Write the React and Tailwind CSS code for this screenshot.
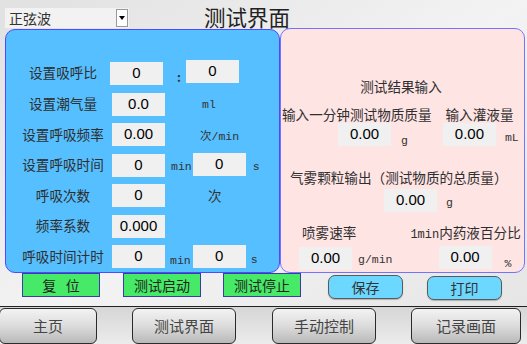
import React from 'react';

const cjk = { fontFamily: '"Noto Sans CJK SC", "Noto Sans", sans-serif' };
const num = { fontFamily: '"Liberation Sans", Arial, sans-serif' };
const mono = { fontFamily: '"Liberation Mono", "Noto Sans CJK SC", monospace' };

const Box = ({ value, className = '' }) => (
  <div
    style={num}
    className={`w-[53px] h-[23px] bg-[#f0f0f0] flex items-center justify-center text-[15px] text-black ${className}`}
  >
    {value}
  </div>
);

const Unit = ({ children, className = '' }) => (
  <span style={mono} className={`text-[11.5px] text-[#333] leading-none ${className}`}>
    {children}
  </span>
);

const Label = ({ children }) => (
  <div className="w-[98px] text-center text-[13.6px] text-[#2e2e2e] leading-none">{children}</div>
);

const Row = ({ children, className = '' }) => (
  <div className={`flex items-center h-[23px] ${className}`}>{children}</div>
);

const GreenBtn = ({ children, className = '' }) => (
  <div
    className={`w-[78px] h-[24px] bg-[#46ea66] border border-[#3b3bb0] flex items-center justify-center text-[14px] text-[#222] ${className}`}
  >
    {children}
  </div>
);

const PillBtn = ({ children, className = '' }) => (
  <div
    className={`w-[75px] h-[24px] bg-[#6dd8ff] border-[1.5px] border-[#5a5a5a] rounded-[7px] shadow-[0_1px_1px_rgba(0,0,0,0.25)] flex items-center justify-center text-[14px] text-[#333] ${className}`}
  >
    {children}
  </div>
);

const NavBtn = ({ children, className = '' }) => (
  <div
    className={`h-[36px] border-[1.5px] border-[#2b2b2b] rounded-[6px] bg-gradient-to-b from-[#f3f3f3] via-[#dcdcdc] to-[#b9b9b9] flex items-center justify-center text-[15px] text-[#444] ${className}`}
  >
    {children}
  </div>
);

export default function App() {
  return (
    <div
      style={cjk}
      className="w-[527px] h-[344px] overflow-hidden bg-gradient-to-br from-[#e1e1e1] via-[#f3f3f3] to-[#e4e4e4] flex flex-col"
    >
      {/* top bar */}
      <div className="h-[28px] flex items-start pt-[8px] pl-[5px]">
        <div className="w-[124px] h-[20px] bg-[#f2f2f2] flex items-center pl-[4px] relative">
          <span className="text-[14px] text-[#333] leading-none">正弦波</span>
          <div className="ml-auto mr-[1px] w-[12px] h-[18px] bg-white border border-[#9a9a9a] flex items-center justify-center">
            <div className="w-0 h-0 border-l-[3.5px] border-r-[3.5px] border-t-[4px] border-l-transparent border-r-transparent border-t-black" />
          </div>
        </div>
        <div className="ml-[75px] -mt-[2px] text-[21.5px] leading-[22px] text-[#222]">测试界面</div>
      </div>

      {/* panels */}
      <div className="flex h-[245px]">
        <div className="ml-[5px] mt-[1px] w-[275px] h-[244px] bg-[#56bfff] border border-[#4b4bff] rounded-[10px] pt-[32px] pl-[8px] flex flex-col gap-[7.5px]">
          <Row className="items-start">
            <Label><span className="block mt-[4px]">设置吸呼比</span></Label>
            <Box value="0" className="-ml-[2px]" />
            <span className="ml-[14px] mt-[6px] text-[12px] text-[#333] font-bold">:</span>
            <Box value="0" className="ml-[5px] -mt-[2px]" />
          </Row>
          <Row>
            <Label>设置潮气量</Label>
            <Box value="0.0" />
            <Unit className="ml-[37px] -mb-[2px]">ml</Unit>
          </Row>
          <Row>
            <Label>设置呼吸频率</Label>
            <Box value="0.00" />
            <Unit className="ml-[35px] mt-[4px]">次/min</Unit>
          </Row>
          <Row>
            <Label>设置呼吸时间</Label>
            <Box value="0" />
            <Unit className="ml-[6px] mt-[4px]">min</Unit>
            <Box value="0" className="ml-[1px] -mt-[1px]" />
            <Unit className="ml-[7px] mt-[4px]">s</Unit>
          </Row>
          <Row>
            <Label>呼吸次数</Label>
            <Box value="0" />
            <span className="ml-[43px] text-[13.6px] text-[#333]">次</span>
          </Row>
          <Row>
            <Label>频率系数</Label>
            <Box value="0.000" />
          </Row>
          <Row>
            <Label>呼吸时间计时</Label>
            <Box value="0" />
            <Unit className="ml-[5px] mt-[8px]">min</Unit>
            <Box value="0" className="ml-[2px]" />
            <Unit className="ml-[5px] mt-[6px]">s</Unit>
          </Row>
        </div>

        <div className="w-[245px] h-[245px] bg-[#ffe4e4] border border-[#7373ff] rounded-[10px] flex flex-col text-[13.6px] text-[#2e2e2e]">
          <div className="mt-[48px] h-[18px] leading-[18px] text-center pr-[3px]">测试结果输入</div>
          <div className="mt-[11px] h-[17px] leading-[17px] flex whitespace-nowrap">
            <span className="ml-[1px]">输入一分钟测试物质质量</span>
            <span className="ml-[14px]">输入灌液量</span>
          </div>
          <div className="h-[23px] flex items-center">
            <Box value="0.00" className="ml-[57px] w-[52px]" />
            <Unit className="ml-[10px] mt-[12px]">g</Unit>
            <Box value="0.00" className="ml-[35px] w-[52px]" />
            <Unit className="ml-[9px] mt-[6px]">mL</Unit>
          </div>
          <div className="mt-[22px] h-[18px] leading-[18px] ml-[9px] whitespace-nowrap">气雾颗粒输出（测试物质的总质量）</div>
          <div className="mt-[3px] h-[22px] flex items-center">
            <Box value="0.00" className="ml-[103px] w-[52px] h-[22px]" />
            <Unit className="ml-[9px] mt-[6px]">g</Unit>
          </div>
          <div className="mt-[12px] h-[18px] leading-[18px] flex whitespace-nowrap">
            <span className="ml-[21px]">喷雾速率</span>
            <span className="ml-[54px]">
              <span style={mono} className="text-[12px]">1min</span>内药液百分比
            </span>
          </div>
          <div className="mt-[6px] h-[22px] flex items-center">
            <Box value="0.00" className="ml-[18px] w-[52px] h-[22px]" />
            <Unit className="ml-[6px] mt-[4px]">g/min</Unit>
            <Box value="0.00" className="ml-[46px] w-[53px] h-[22px] -mt-[2px]" />
            <Unit className="ml-[13px] mt-[12px]">%</Unit>
          </div>
        </div>
      </div>

      {/* action buttons */}
      <div className="h-[35px] flex items-start">
        <GreenBtn className="ml-[22px] mt-[0px]">复&nbsp;&nbsp;&nbsp;位</GreenBtn>
        <GreenBtn className="ml-[23px]">测试启动</GreenBtn>
        <GreenBtn className="ml-[22px]">测试停止</GreenBtn>
        <PillBtn className="ml-[27px] mt-[2px]">保存</PillBtn>
        <PillBtn className="ml-[24px] mt-[3px]">打印</PillBtn>
      </div>

      {/* nav */}
      <div className="flex-1 border-t border-[#222] bg-gradient-to-b from-[#d6d6d6] to-[#ececec] flex items-start pt-[1px]">
        <NavBtn className="w-[98px] -ml-[1px]">主页</NavBtn>
        <NavBtn className="w-[104px] ml-[35px]">测试界面</NavBtn>
        <NavBtn className="w-[104px] ml-[36px]">手动控制</NavBtn>
        <NavBtn className="w-[110px] ml-[35px]">记录画面</NavBtn>
      </div>
    </div>
  );
}
